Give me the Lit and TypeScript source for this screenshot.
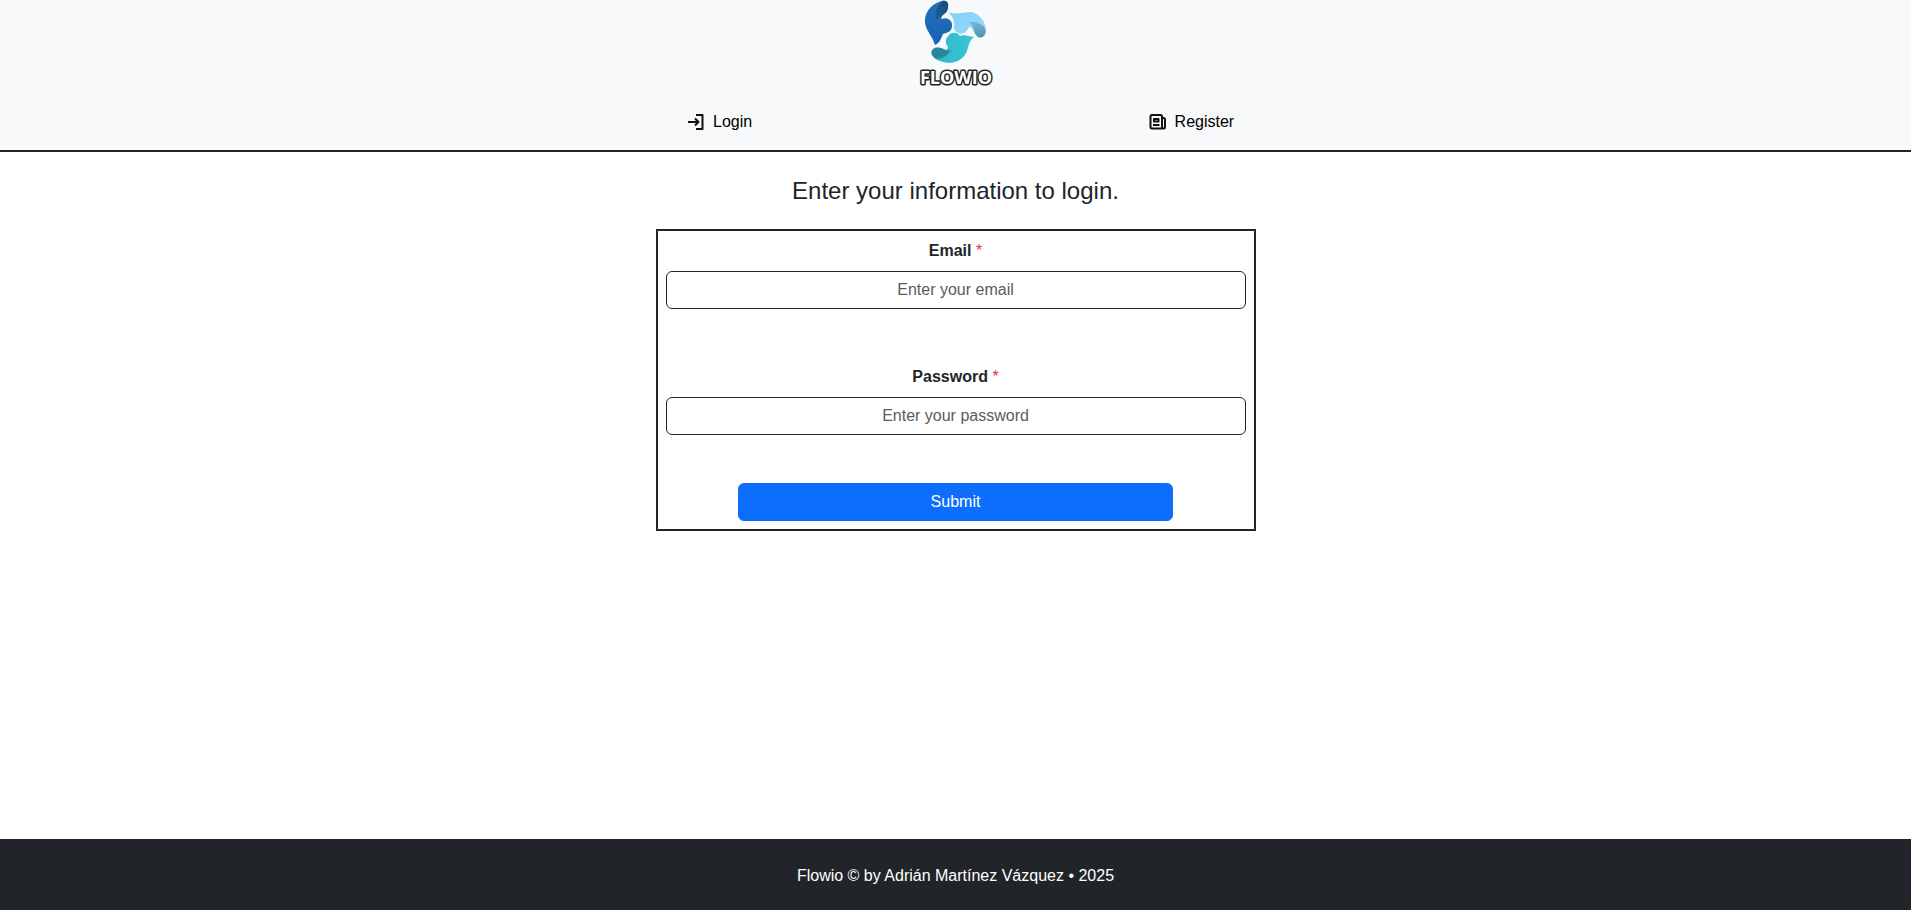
import { LitElement, html, css, svg } from "lit";
import { customElement } from "lit/decorators.js";

const logo = svg`
  <svg class="logo" viewBox="0 0 100 92" role="img" aria-label="Flowio">
    <defs>
      <linearGradient id="blue" x1="0" y1="0" x2="0" y2="1">
        <stop offset="0" stop-color="#2272b8" /><stop offset="1" stop-color="#1a62b4" />
      </linearGradient>
      <linearGradient id="navy" x1="0" y1="1" x2="1" y2="0">
        <stop offset="0" stop-color="#1f5f9c" /><stop offset="1" stop-color="#154a7c" />
      </linearGradient>
      <linearGradient id="sky" x1="0" y1="0" x2="1" y2="1">
        <stop offset="0" stop-color="#7fd0f8" /><stop offset="1" stop-color="#9bdcfa" />
      </linearGradient>
      <linearGradient id="steel" x1="0" y1="0" x2="0" y2="1">
        <stop offset="0" stop-color="#74b6d6" /><stop offset="1" stop-color="#5090b0" />
      </linearGradient>
      <linearGradient id="teal" x1="0" y1="0" x2="1" y2="0">
        <stop offset="0" stop-color="#2fb3c8" /><stop offset="1" stop-color="#3cc6d6" />
      </linearGradient>
    </defs>
    <path fill="url(#blue)" d="M36 1C27 3 20 10 19 19C18 29 25 33 29 45C34 43 35 38 37 34C40 33 46 32 46 26A7 7 0 0 0 36 19C35 19 35 17 37 15C40 13 42 11 42 7C43 3 40 0 36 1Z" />
    <path fill="url(#navy)" d="M30 20C28 11 32 4 37 1C41 0 43 4 42 7C42 13 35 15 30 20Z" />
    <path fill="url(#sky)" d="M41 11C48 16 57 12 65 12C74 14 80 22 80 31C80 36 76 39 72 37C67 34 68 29 64 27C62 27 62 31 58 33A7 7 0 0 1 48 26C49 20 46 15 41 11Z" />
    <path fill="url(#steel)" d="M63 22C70 21 76 24 79 28C81 34 77 39 72 37C67 33 69 26 63 22Z" />
    <path fill="url(#teal)" d="M68 37C63 37 59 34 54 36C51 32 46 32 43 35C39 39 39 43 42 47C42 49 41 50 39 50C35 47 29 46 26 50C24 55 28 59 34 61C44 65 54 62 59 55C63 49 61 43 68 37Z" />
    <path class="fold" d="M45 50C40 52 36 47 30 48C25 49 24 54 28 57C32 61 41 57 45 50Z" />
    <text class="wordmark" x="50" y="84" text-anchor="middle">FLOWIO</text>
  </svg>
`;

const loginIcon = svg`
  <svg class="icon" viewBox="0 0 18 18" aria-hidden="true">
    <path d="M9 2H15.5V16H9M1 9H11M8 5.5L11.5 9L8 12.5" />
  </svg>
`;

const registerIcon = svg`
  <svg class="icon" viewBox="0 0 18 18" aria-hidden="true">
    <path d="M3 2H11.5Q13 2 13 3.5V15.5H3Q1.5 15.5 1.5 14V3.5Q1.5 2 3 2ZM13 5H14.5Q16 5 16 6.5V14Q16 15.5 14.5 15.5H13M5 6H9.5V8.5H5ZM4 12H10.5" />
  </svg>
`;

@customElement("app-root")
export class AppRoot extends LitElement {
  static styles = css`
    :host {
      display: flex;
      flex-direction: column;
      min-height: 100vh;
      box-sizing: border-box;
      font: 16px/24px "Liberation Sans", Arial, sans-serif;
      color: #212529;
      background: #fff;
      text-align: center;
    }
    * {
      box-sizing: border-box;
    }
    .header {
      display: flex;
      flex-direction: column;
      align-items: center;
      background: #f8f9fa;
      border-bottom: 2px solid #212529;
    }
    .brand {
      display: flex;
    }
    .logo {
      display: block;
      width: 100px;
      height: 92px;
    }
    .fold {
      fill: #2a8798;
    }
    .wordmark {
      font: bold 18px/24px "Open Sans", sans-serif;
      fill: #fff;
      stroke: #222;
      stroke-width: 3px;
      stroke-linejoin: round;
      paint-order: stroke;
    }
    .nav {
      display: grid;
      grid-template-columns: 1fr 1fr;
      width: 50%;
      padding: 10px 6px 8px;
    }
    .link {
      display: flex;
      justify-content: center;
      align-items: center;
      gap: 8px;
      padding: 8px;
      color: #000;
      text-decoration: none;
    }
    .icon {
      width: 18px;
      height: 18px;
      fill: none;
      stroke: #111;
      stroke-width: 2;
      stroke-linejoin: round;
    }
    .main {
      flex: 1;
      padding: 24px 16px;
    }
    .title {
      margin: 0 0 24px;
      font-size: 24px;
      line-height: 29px;
      font-weight: 400;
    }
    .form {
      display: flex;
      flex-direction: column;
      align-items: center;
      max-width: 600px;
      margin: 0 auto;
      padding: 8px;
      border: 2px solid #212529;
    }
    .field {
      display: flex;
      flex-direction: column;
      gap: 8px;
      width: 100%;
      margin-bottom: 56px;
    }
    .field.last {
      margin-bottom: 48px;
    }
    .label {
      font-weight: 700;
    }
    .required {
      color: #dc3545;
      font-weight: 400;
    }
    .input {
      width: 100%;
      height: 38px;
      padding: 6px 12px;
      border: 1px solid #212529;
      border-radius: 6px;
      background: #fff;
      font: inherit;
      color: inherit;
      text-align: center;
    }
    .input::placeholder {
      color: #595c5f;
      opacity: 1;
    }
    .submit {
      width: 75%;
      height: 38px;
      padding: 6px 12px;
      border: 1px solid #0d6efd;
      border-radius: 6px;
      background: #0d6efd;
      color: #fff;
      font: inherit;
      cursor: pointer;
    }
    .footer {
      padding: 25px 16px 22px;
      background: #212529;
      color: #fff;
    }
  `;

  private onSubmit(event: Event) {
    event.preventDefault();
  }

  render() {
    return html`
      <header class="header">
        <a class="brand" href="#">${logo}</a>
        <nav class="nav">
          <a class="link" href="#login">${loginIcon}<span>Login</span></a>
          <a class="link" href="#register">${registerIcon}<span>Register</span></a>
        </nav>
      </header>
      <main class="main">
        <h1 class="title">Enter your information to login.</h1>
        <form class="form" @submit=${this.onSubmit}>
          <div class="field">
            <label class="label" for="email">Email <span class="required">*</span></label>
            <input class="input" id="email" type="email" placeholder="Enter your email" required />
          </div>
          <div class="field last">
            <label class="label" for="password">Password <span class="required">*</span></label>
            <input class="input" id="password" type="password" placeholder="Enter your password" required />
          </div>
          <button class="submit" type="submit">Submit</button>
        </form>
      </main>
      <footer class="footer">Flowio © by Adrián Martínez Vázquez • 2025</footer>
    `;
  }
}
